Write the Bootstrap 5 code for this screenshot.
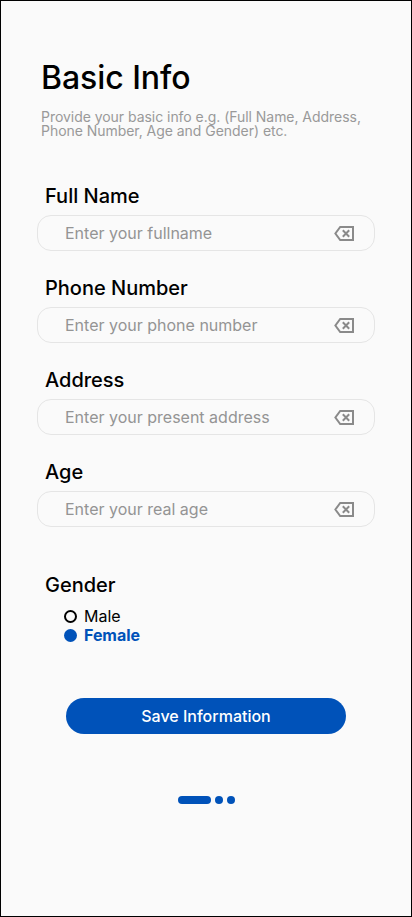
<!DOCTYPE html>
<html lang="en">
<head>
<meta charset="utf-8">
<meta name="viewport" content="width=device-width, initial-scale=1">
<title>Basic Info</title>
<link href="https://cdn.jsdelivr.net/npm/bootstrap@5.3.0/dist/css/bootstrap.min.css" rel="stylesheet">
<style>
body{font-family:Inter,sans-serif;color:#000;background:#fafafa}
.screen{height:917px;border:1px solid #000;padding:59px 36px 0}
.title{font-size:32px;line-height:36px;font-weight:500;letter-spacing:-.05px;margin:0 0 14px 4px}
.intro{font-size:14px;line-height:14px;letter-spacing:-.04px;color:#999;margin:0 0 46px 4px;white-space:nowrap}
.field-row{height:92px}
.field-name{font-size:20px;line-height:24px;font-weight:500;margin:0 0 7px 8px;display:block}
.field-box{height:36px;border:1px solid #e5e5e5;border-radius:14px;padding:0 19px 0 27px}
.field-box .form-control{font-size:16px;height:34px;color:#000}
.field-box .form-control::placeholder{color:#949494;opacity:1}
.gender-name{margin:21px 0 0 8px}
.choices{margin:10px 0 0 27px;font-size:16px;line-height:19px}
.choices label{gap:7px;height:19px}
.choices svg{margin-top:-1px}
.chosen{color:#0052b9;font-weight:700;letter-spacing:-.05px}
.save{width:280px;height:36px;border-radius:18px;background:#0052b9;color:#fff;font-size:16px;font-weight:500;margin-top:53px}
.pager{margin-top:62px;gap:4px}
.pager span{width:8px;height:8px;border-radius:4px;background:#0052b9}
.pager .current{width:33px}
</style>
<script src="https://cdn.jsdelivr.net/npm/bootstrap@5.3.0/dist/js/bootstrap.bundle.min.js"></script>
</head>
<body>
<svg class="d-none"><symbol id="clear" viewBox="0 0 22 16"><path d="M7.2 2H20V15H7.2L2.4 8.5z" fill="none" stroke="#8a8a8a" stroke-width="2"/><path d="M9.8 5.3l6.4 6.4M16.2 5.3l-6.4 6.4" stroke="#8a8a8a" stroke-width="2"/></symbol></svg>
<main class="screen">
<h1 class="title">Basic Info</h1>
<p class="intro">Provide your basic info e.g. (Full Name, Address,<br>Phone Number, Age and Gender) etc.</p>
<form>
<div class="field-row"><label class="field-name" for="n">Full Name</label><div class="field-box d-flex align-items-center"><input id="n" class="form-control border-0 bg-transparent shadow-none p-0" placeholder="Enter your fullname"><svg width="22" height="16" class="flex-shrink-0"><use href="#clear"/></svg></div></div>
<div class="field-row"><label class="field-name" for="p">Phone Number</label><div class="field-box d-flex align-items-center"><input id="p" class="form-control border-0 bg-transparent shadow-none p-0" placeholder="Enter your phone number"><svg width="22" height="16" class="flex-shrink-0"><use href="#clear"/></svg></div></div>
<div class="field-row"><label class="field-name" for="a">Address</label><div class="field-box d-flex align-items-center"><input id="a" class="form-control border-0 bg-transparent shadow-none p-0" placeholder="Enter your present address"><svg width="22" height="16" class="flex-shrink-0"><use href="#clear"/></svg></div></div>
<div class="field-row"><label class="field-name" for="g">Age</label><div class="field-box d-flex align-items-center"><input id="g" class="form-control border-0 bg-transparent shadow-none p-0" placeholder="Enter your real age"><svg width="22" height="16" class="flex-shrink-0"><use href="#clear"/></svg></div></div>
<div class="field-name gender-name">Gender</div>
<div class="choices"><label class="d-flex align-items-center"><svg width="13" height="13"><circle cx="6.5" cy="6.5" r="5.5" fill="none" stroke="#000" stroke-width="2"/></svg>Male</label><label class="d-flex align-items-center chosen"><svg width="13" height="13"><circle cx="6.5" cy="6.5" r="6.5" fill="#0052b9"/></svg>Female</label></div>
<button type="button" class="btn save d-block mx-auto p-0 border-0">Save Information</button>
</form>
<div class="pager d-flex justify-content-center"><span class="current"></span><span></span><span></span></div>
</main>
</body>
</html>
